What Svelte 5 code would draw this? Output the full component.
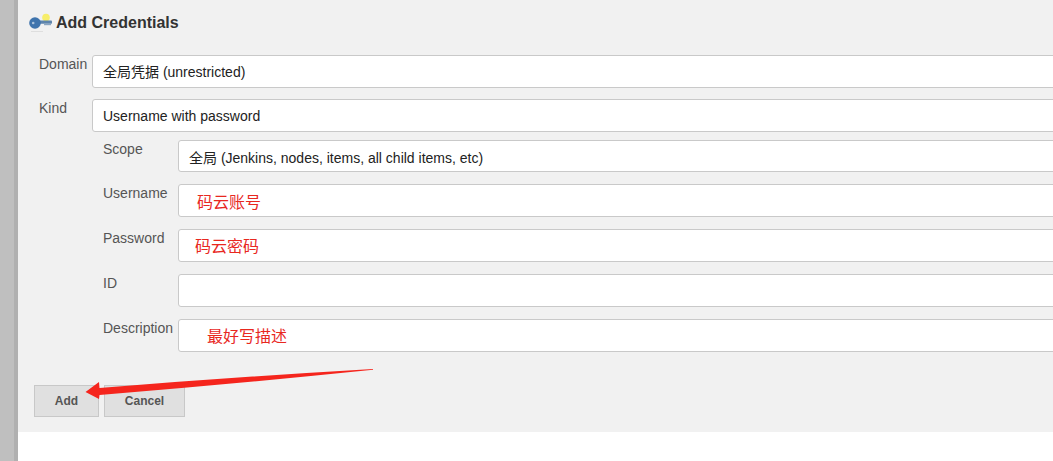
<script>
  const outer = [{ label: 'Domain', value: '全局凭据 (unrestricted)' }, { label: 'Kind', value: 'Username with password' }];
  const inner = [
    { label: 'Scope', value: '全局 (Jenkins, nodes, items, all child items, etc)', kind: 'plain' },
    { label: 'Username', value: '码云账号', kind: 'note n1' },
    { label: 'Password', value: '码云密码', kind: 'note n2' },
    { label: 'ID', value: '', kind: 'plain' },
    { label: 'Description', value: '最好写描述', kind: 'note n3' }
  ];
</script>

<div class="page">
  <div class="rail"></div>
  <main class="panel">
    <h1 class="title">
      <svg class="key" width="24" height="22" viewBox="0 0 24 22" aria-hidden="true">
        <circle cx="17" cy="4.5" r="3.8" fill="#f7ee6a"/>
        <rect x="8" y="7.6" width="15" height="3.2" rx="0.8" fill="#5d84ac"/>
        <rect x="15" y="10.4" width="7" height="1.8" fill="#8aa5c0"/>
        <circle cx="6" cy="10" r="5.8" fill="#3f74ad"/>
        <circle cx="4.2" cy="10" r="1.3" fill="#a9c2dc"/>
        <rect x="2" y="18" width="12" height="1" fill="#dedede"/>
      </svg>
      <span>Add Credentials</span>
    </h1>
    <div class="form">
      {#each outer as row}
        <div class="row outer">
          <div class="lab">{row.label}</div>
          <div class="field">{row.value}</div>
        </div>
      {/each}
      <div class="nested">
        {#each inner as row}
          <div class="row">
            <div class="lab">{row.label}</div>
            <div class="field {row.kind}">{row.value}</div>
          </div>
        {/each}
      </div>
    </div>
    <div class="buttons">
      <button class="add">Add</button>
      <button class="cancel">Cancel</button>
    </div>
    <svg class="arrow" width="300" height="50" viewBox="0 0 300 50" aria-hidden="true">
      <path d="M0.5 24 L14 14 L14.5 20 Q150 9 288 1 L288 1.8 Q150 16 14.5 27 L14 31 Z" fill="#f5251d"/>
    </svg>
  </main>
</div>

<style>
  :global(body) { margin: 0; background: #fff; }
  .page {
    display: flex;
    height: 461px;
    overflow: hidden;
    font-family: "Liberation Sans", "Noto Sans CJK SC", sans-serif;
  }
  .rail {
    flex: 0 0 14px;
    background: #bfbfbf;
    border-right: 4px solid #b0b0b0;
  }
  .panel {
    position: relative;
    flex: 1;
    min-width: 0;
    height: 432px;
    background: #f1f1f1;
    overflow: hidden;
    box-sizing: border-box;
    padding: 11px 0 0 11px;
  }
  .title {
    display: flex;
    align-items: center;
    gap: 3px;
    margin: 0;
    height: 24px;
    font-size: 16px;
    font-weight: 700;
    color: #333;
  }
  .key { flex: none; margin-top: 2px; }
  .form {
    display: flex;
    flex-direction: column;
    gap: 11.5px;
    margin: 20px -20px 0 10px;
  }
  .row { display: flex; }
  .outer .lab { flex: 0 0 53px; }
  .lab {
    flex: 0 0 75px;
    padding-top: 1px;
    font-size: 14px;
    line-height: 16px;
    color: #555;
    white-space: nowrap;
  }
  .field {
    flex: 1;
    box-sizing: border-box;
    height: 32.5px;
    padding: 0 10px;
    line-height: 33px;
    font-size: 14px;
    color: #222;
    background: #fff;
    border: 1px solid #c9c9c9;
    border-radius: 3px;
    white-space: nowrap;
  }
  .plain { line-height: 35px; }
  .note { font-size: 16px; color: #e8281f; }
  .n1 { padding-left: 18px; line-height: 35px; }
  .n2 { padding-left: 16px; }
  .n3 { padding-left: 28px; }
  .nested {
    display: flex;
    flex-direction: column;
    gap: 12.4px;
    margin: -3.5px 0 0 64px;
  }
  .buttons {
    display: flex;
    gap: 5px;
    margin: 33.5px 0 0 5px;
  }
  button {
    height: 32px;
    padding: 0;
    font-family: inherit;
    font-size: 12px;
    font-weight: 700;
    color: #555;
    background: #e0e0e0;
    border: 1px solid #c8c8c8;
  }
  .add { width: 65px; }
  .cancel { width: 81px; }
  .arrow {
    position: absolute;
    left: 67px;
    top: 368px;
  }
</style>
